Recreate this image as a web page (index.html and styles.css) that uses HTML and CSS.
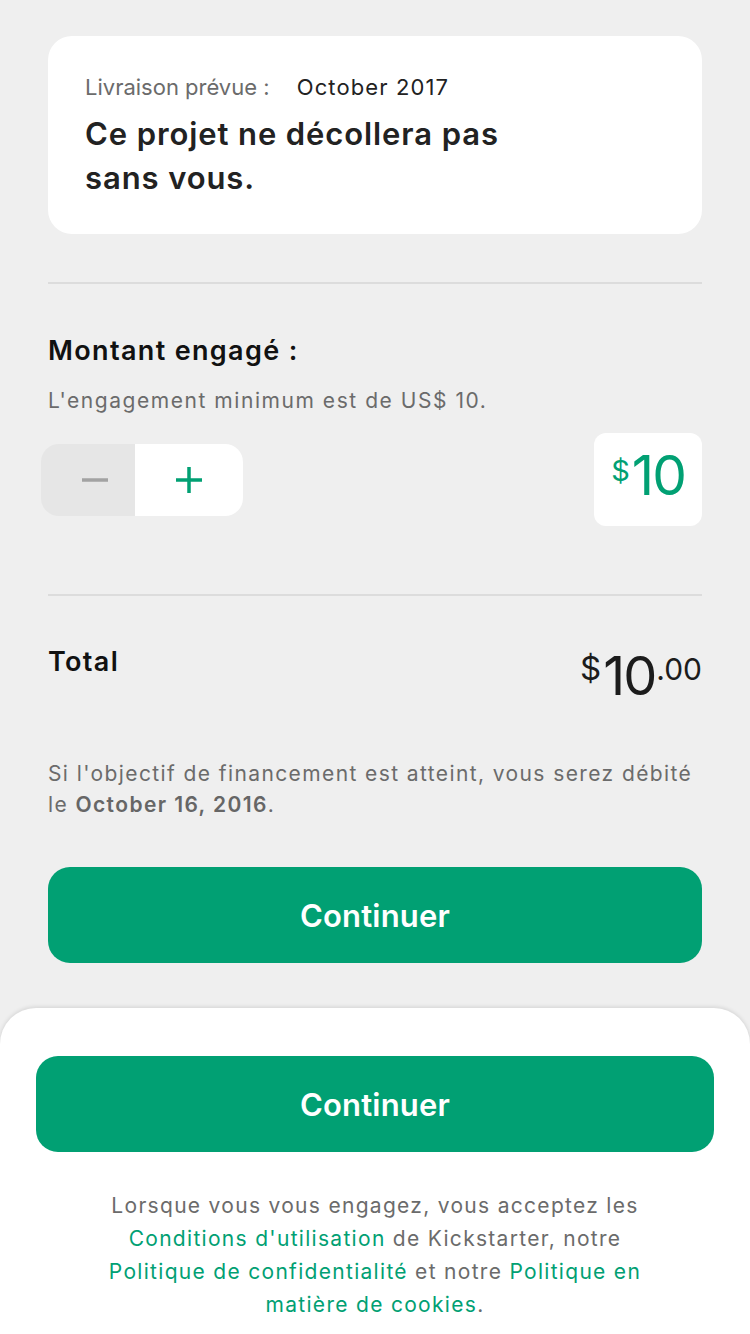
FILE: index.html
```html
<!DOCTYPE html>
<html lang="fr">
<head>
<meta charset="utf-8">
<title>Engagement</title>
<link rel="stylesheet" href="styles.css">
</head>
<body>
<main class="page">
  <section class="card">
    <p class="meta"><span class="meta-label">Livraison prévue :</span> <span class="meta-value">October 2017</span></p>
    <h1 class="title">Ce projet ne décollera pas<br>sans vous.</h1>
  </section>

  <hr class="divider divider-top">

  <section class="pledge">
    <h2 class="section-title">Montant engagé :</h2>
    <p class="hint">L'engagement minimum est de US$ 10.</p>
    <div class="pledge-row">
      <div class="stepper">
        <button class="step step-minus" aria-label="Diminuer">
          <svg width="26" height="4" viewBox="0 0 26 4"><rect x="0" y="0.25" width="26" height="3.5" fill="#a2a2a2"/></svg>
        </button>
        <button class="step step-plus" aria-label="Augmenter">
          <svg width="26" height="26" viewBox="0 0 26 26"><rect x="0" y="11.25" width="26" height="3.5" fill="#01a073"/><rect x="11.25" y="0" width="3.5" height="26" fill="#01a073"/></svg>
        </button>
      </div>
      <div class="amount-box"><span class="cur">$</span><span class="amt">10</span></div>
    </div>
  </section>

  <hr class="divider divider-mid">

  <section class="total-row">
    <h2 class="section-title">Total</h2>
    <div class="total-amount"><span class="t-cur">$</span><span class="t-int">10</span><span class="t-dec">.00</span></div>
  </section>

  <p class="charge">Si l'objectif de financement est atteint, vous serez débité le <strong>October 16, 2016</strong>.</p>

  <button class="cta cta-main">Continuer</button>
</main>

<footer class="sheet">
  <button class="cta cta-sheet">Continuer</button>
  <p class="legal">Lorsque vous vous engagez, vous acceptez les <a href="#">Conditions d'utilisation</a> de Kickstarter, notre <a href="#">Politique de confidentialité</a> et notre <a href="#">Politique en matière de cookies</a>.</p>
</footer>
</body>
</html>
```

FILE: styles.css
```css
* { box-sizing: border-box; }

html, body {
  margin: 0;
  padding: 0;
}

body {
  background: #efefef;
  font-family: Inter, "Noto Sans", "Liberation Sans", sans-serif;
  color: #222;
  width: 750px;
  height: 1334px;
  overflow: hidden;
}

.page {
  padding: 36px 48px 0;
}

.card {
  background: #fff;
  border-radius: 24px;
  padding: 36px 37px 34px;
}

.meta {
  margin: 0;
  font-size: 22px;
  line-height: 30px;
}

.meta-label { color: #6b6b6b; }
.meta-value { color: #222; margin-left: 21px; letter-spacing: 1.1px; }

.title {
  margin: 10px 0 0;
  font-size: 31px;
  line-height: 44px;
  font-weight: 600;
  color: #222;
  letter-spacing: 0.9px;
}

.divider {
  border: 0;
  height: 2px;
  background: #dcdcdc;
  margin: 0;
}

.divider-top { margin-top: 48px; }
.divider-mid { margin-top: 68px; }

.section-title {
  margin: 0;
  font-size: 27px;
  line-height: 32px;
  font-weight: 600;
  color: #111;
  letter-spacing: 1.35px;
}

.pledge { padding-top: 51px; }

.hint {
  margin: 20px 0 0;
  font-size: 21px;
  line-height: 28px;
  color: #6b6b6b;
  letter-spacing: 1.55px;
}

.pledge-row {
  margin-top: 18px;
  display: flex;
  align-items: center;
  justify-content: space-between;
}

.stepper {
  margin-left: -7px;
  display: flex;
  width: 202px;
  height: 72px;
  border-radius: 18px;
  overflow: hidden;
}

.step {
  border: 0;
  padding: 0;
  margin: 0;
  display: flex;
  align-items: center;
  justify-content: center;
  height: 72px;
}

.step-minus { width: 94px; background: #e6e6e6; padding-left: 14px; }
.step-plus { width: 108px; background: #fff; }

.amount-box {
  width: 108px;
  height: 93px;
  background: #fff;
  border-radius: 12px;
  display: flex;
  align-items: flex-start;
  justify-content: center;
  padding-top: 15px;
  color: #01a073;
}

.cur {
  font-size: 29px;
  line-height: 1;
  margin-top: 8px;
  margin-right: 2px;
}

.amt {
  font-size: 55px;
  line-height: 1;
  letter-spacing: -2px;
}

.total-row {
  padding-top: 50px;
  display: flex;
  justify-content: space-between;
  align-items: flex-start;
}

.total-amount {
  display: flex;
  align-items: flex-start;
  color: #1c1c1c;
  margin-top: 3px;
}

.t-cur {
  font-size: 33px;
  line-height: 1;
  margin-top: 3px;
  margin-right: 2px;
}

.t-int {
  font-size: 54px;
  line-height: 1;
  letter-spacing: -2px;
}

.t-dec {
  font-size: 30px;
  line-height: 1;
  margin-top: 5px;
  margin-left: 1px;
}

.charge {
  margin: 55px 0 0;
  font-size: 21px;
  line-height: 31px;
  color: #6b6b6b;
  letter-spacing: 1.4px;
}

.charge strong {
  font-weight: 600;
  color: #666;
}

.cta {
  display: block;
  width: 100%;
  height: 96px;
  border: 0;
  border-radius: 22px;
  background: #01a073;
  color: #fff;
  font-family: Inter, "Noto Sans", "Liberation Sans", sans-serif;
  font-size: 31px;
  font-weight: 600;
  letter-spacing: 0.2px;
}

.cta-main { margin-top: 47px; }

.sheet {
  margin-top: 45px;
  background: #fff;
  border-radius: 36px 36px 0 0;
  box-shadow: 0 -1px 4px rgba(0, 0, 0, 0.12);
  padding: 48px 36px 60px;
}

.legal {
  margin: 37px auto 0;
  max-width: 556px;
  text-align: center;
  font-size: 21px;
  line-height: 33px;
  color: #6b6b6b;
  letter-spacing: 1.3px;
}

.legal a {
  color: #01a073;
  text-decoration: none;
}
```
